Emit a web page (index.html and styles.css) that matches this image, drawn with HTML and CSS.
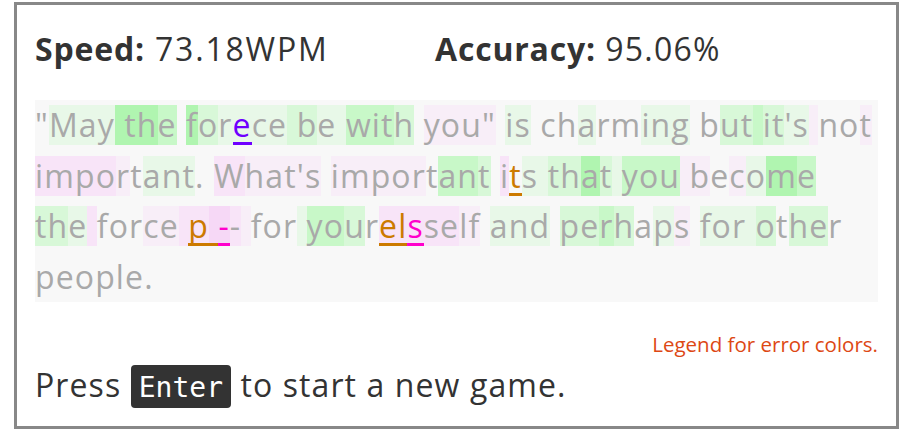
FILE: index.html
```html
<!DOCTYPE html>
<html lang="en">
<head>
<meta charset="utf-8">
<title>Typing result</title>
<link rel="stylesheet" href="styles.css">
</head>
<body>
<main class="frame">
  <div class="stats">
    <div class="stat"><b>Speed:</b> 73.18WPM</div>
    <div class="stat"><b>Accuracy:</b> 95.06%</div>
  </div>
  <div class="passage"><span>"</span><span class="g1">May</span><span class="g4"> th</span><span class="g3">e</span> <span class="g4">f</span><span class="g2">o</span><span class="g1">r</span><span class="g1 ep">e</span><span class="g1">ce</span><span class="g2"> b</span><span class="g1">e </span><span class="g3">wit</span><span class="g2">h</span> <span class="p1">you"</span> <span class="g1">is</span> ch<span class="g1">a</span>rm<span class="g1">ing</span> b<span class="g2">ut</span><span class="g3"> </span><span class="g2">it</span><span class="g1">'s</span><span class="p1"> </span>no<span class="p1">t</span><br><span class="p2">impo</span><span class="p1">r</span>t<span class="g1">ant</span>. <span class="p2">W</span><span class="p1">hat's</span> <span class="p1">impor</span>t<span class="g3">an</span><span class="g2">t</span> <span class="p2">i</span><span class="eo">t</span><span class="g1">s </span><span class="g2">th</span><span class="g4">a</span><span class="g2">t</span><span class="g1"> </span><span class="g3">you</span><span class="p1"> b</span>e<span class="p1">c</span><span class="g1">o</span><span class="g4">m</span><span class="g3">e</span><br><span class="g2">th</span><span class="g1">e</span><span class="p2"> </span>for<span class="p1">ce</span><span class="p2"> </span><span class="p2 eo">p</span><span class="p3 eo"> </span><span class="p3 em">-</span><span class="p2">-</span><span class="p1"> </span>for<span class="g1"> </span><span class="g3">yo</span><span class="g2">u</span>r<span class="p2 eo">el</span><span class="p2 em">s</span><span class="p2">se</span><span class="p1">lf</span> <span class="g1">and</span> <span class="g2">pe</span><span class="g3">r</span><span class="g2">h</span>a<span class="g1">p</span><span class="p1">s</span> <span class="g1">for </span><span class="g2">o</span>t<span class="g2">he</span>r<br><span>people.</span></div>
  <div class="legend"><span class="legend-link">Legend for error colors.</span></div>
  <div class="prompt">Press <kbd class="key">Enter</kbd> to start a new game.</div>
</main>
</body>
</html>
```
FILE: styles.css
```css
body {
  margin: 0;
  background: #fff;
  font-family: "Open Sans", sans-serif;
}

.frame {
  box-sizing: border-box;
  width: 885px;
  height: 427px;
  margin: 2px 0 0 14px;
  border: 3px solid #888;
  padding: 0 18px;
  color: #333;
}

.stats {
  display: flex;
  padding-top: 24px;
  font-size: 32px;
  line-height: 40px;
  letter-spacing: 1.2px;
}

.stat {
  width: 400px;
}

.stat b {
  font-weight: 700;
  letter-spacing: 0.8px;
}

.stat:first-child {
  letter-spacing: 1.8px;
}

.passage {
  margin-top: 31px;
  height: 202px;
  background: #f8f8f8;
  color: #a9a9a9;
  font-size: 32px;
  line-height: 50.5px;
  letter-spacing: 1.12px;
}

.passage span {
  background: linear-gradient(to bottom,
    transparent 2px,
    var(--bg, transparent) 2px,
    var(--bg, transparent) calc(100% - 4px),
    var(--ul, var(--bg, transparent)) calc(100% - 4px),
    var(--ul, var(--bg, transparent)) calc(100% - 1px),
    transparent calc(100% - 1px));
}

.g1 { --bg: #e8f8e8; }
.g2 { --bg: #d8f8d8; }
.g3 { --bg: #c8f8c8; }
.g4 { --bg: #b0f5b0; }
.p1 { --bg: #f8eef8; }
.p2 { --bg: #f8e4f8; }
.p3 { --bg: #f6d8f6; }

.ep { color: #6f00ff; --ul: #6f00ff; }
.eo { color: #cc7a00; --ul: #cc7a00; }
.em { color: #ff00cc; --ul: #ff00cc; }

.legend {
  margin-top: 30px;
  text-align: right;
  font-size: 20.5px;
  line-height: 24px;
}

.legend-link {
  color: #dd4814;
}

.prompt {
  margin-top: 4px;
  font-size: 32px;
  line-height: 50px;
  letter-spacing: 1.1px;
}

.key {
  display: inline-block;
  padding: 2px 8px 0;
  border-radius: 4px;
  background: #333;
  color: #fff;
  font-family: "DejaVu Sans Mono", monospace;
  font-size: 28px;
  line-height: 41px;
  letter-spacing: 0;
}
```
